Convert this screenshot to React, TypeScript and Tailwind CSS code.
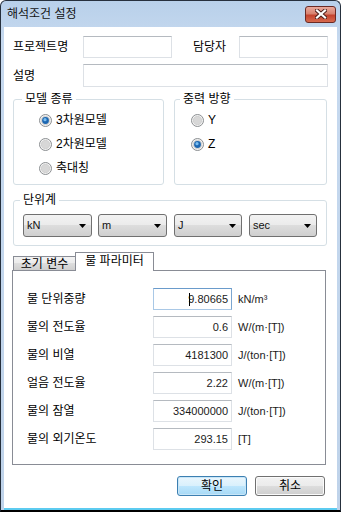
import React from "react";

const TextBox = ({ w, value, focused }: { w: string; value?: string; focused?: boolean }) => (
  <div
    className={`${w} h-[22px] flex items-center justify-end pr-[3px] text-[11px] text-[#1b1b1b] border ${
      focused ? "border-[#a9c8e6] border-t-[#6a9bcb] border-r-[#7ba6d0]" : "border-[#dde1e6] border-t-[#b5bac0]"
    }`}
  >
    {focused && <span className="inline-block w-px h-[13px] bg-black -mr-[2px] relative z-10" />}
    {value}
  </div>
);

const RadioDot = ({ checked }: { checked?: boolean }) => (
  <svg width="13" height="13" viewBox="0 0 13 13">
    <circle cx="6.5" cy="6.5" r="6" fill="#f3f3f3" stroke="#8b8e91" />
    <circle cx="6.5" cy="6.5" r="4.2" fill="#d7d7d7" stroke="#c4c4c4" strokeWidth="0.6" />
    {checked && (
      <>
        <circle cx="6.5" cy="6.5" r="3.4" fill="#1d67b1" />
        <circle cx="6" cy="5.7" r="1.6" fill="#79bdf0" />
      </>
    )}
  </svg>
);

const Radio = ({ label, checked }: { label: string; checked?: boolean }) => (
  <div className="flex items-center h-[24px]">
    <RadioDot checked={checked} />
    <span className="ml-[4px] leading-[14px]">{label}</span>
  </div>
);

const Combo = ({ w, ml, value }: { w: string; ml: string; value: string }) => (
  <div
    className={`${w} ${ml} h-[23px] flex items-center pl-[3px] pr-[5px] border border-[#707070] rounded-[3px] bg-[linear-gradient(#f2f2f2,#ebebeb_50%,#dddddd_50%,#cfcfcf)]`}
  >
    <span className="flex-1 text-[11px] text-[#111]">{value}</span>
    <svg width="7" height="4" viewBox="0 0 7 4">
      <path d="M0 0h7L3.5 4z" fill="#000" />
    </svg>
  </div>
);

const params = [
  { label: "물 단위중량", value: "9.80665", unit: "kN/m³", focused: true },
  { label: "물의 전도율", value: "0.6", unit: "W/(m·[T])" },
  { label: "물의 비열", value: "4181300", unit: "J/(ton·[T])" },
  { label: "얼음 전도율", value: "2.22", unit: "W/(m·[T])" },
  { label: "물의 잠열", value: "334000000", unit: "J/(ton·[T])" },
  { label: "물의 외기온도", value: "293.15", unit: "[T]" },
];

export default function App() {
  return (
    <div className="w-[341px] h-[512px] font-['Liberation_Sans','Noto_Sans_CJK_KR',sans-serif] text-[12px] text-black">
      <div className="w-[341px] h-[512px] flex flex-col rounded-t-[6px] border border-b-2 border-[#26303d] border-b-black bg-[linear-gradient(#b8d0ea,#c6d9ef_40px,#bfd3ea)]">
        {/* Title bar */}
        <div className="h-[26px] flex items-center pl-[6px] pr-[4px]">
          <span className="flex-1 leading-[14px] text-[#141414]">해석조건 설정</span>
          <div className="w-[31px] h-[17px] flex items-center justify-center rounded-[3px] border border-[#6a2a24] bg-[linear-gradient(#e9a99b,#d8826f_45%,#c4432e_55%,#d76a4e)]">
            <svg width="12" height="10" viewBox="0 0 12 10">
              <path d="M2 1.5l8 7M10 1.5l-8 7" stroke="#4a1c18" strokeWidth="4" strokeLinecap="square" />
              <path d="M2 1.5l8 7M10 1.5l-8 7" stroke="#fff" strokeWidth="2.2" strokeLinecap="square" />
            </svg>
          </div>
        </div>

        {/* Body */}
        <div className="flex-1 mx-[3px] bg-white border-b-2 border-[#5ccbf0] px-[9px] pt-[9px] flex flex-col">
          <div className="flex items-center h-[22px]">
            <span className="w-[70px] leading-[14px]">프로젝트명</span>
            <TextBox w="w-[89px]" />
            <span className="ml-[21px] w-[46px] leading-[14px]">담당자</span>
            <TextBox w="w-[89px]" />
          </div>
          <div className="flex items-center h-[23px] mt-[6px]">
            <span className="w-[70px] leading-[14px]">설명</span>
            <div className="flex-1 h-[23px] border border-[#dde1e6] border-t-[#b5bac0]" />
          </div>

          <div className="mt-[5px] flex gap-[10px]">
            <fieldset className="w-[151px] h-[93px] border border-[#d5dfe5] rounded-[3px]">
              <legend className="ml-[8px] px-[3px] leading-[14px]">모델 종류</legend>
              <div className="pt-[2px] pl-[25px]">
                <Radio label="3차원모델" checked />
                <Radio label="2차원모델" />
                <Radio label="축대칭" />
              </div>
            </fieldset>
            <fieldset className="w-[153px] h-[93px] border border-[#d5dfe5] rounded-[3px]">
              <legend className="ml-[5px] px-[3px] leading-[14px]">중력 방향</legend>
              <div className="pt-[2px] pl-[16px]">
                <Radio label="Y" />
                <Radio label="Z" checked />
              </div>
            </fieldset>
          </div>

          <fieldset className="mt-[8px] w-[314px] h-[53px] border border-[#d5dfe5] rounded-[3px]">
            <legend className="ml-[6px] px-[3px] leading-[14px]">단위계</legend>
            <div className="pt-[7px] pl-[9px] flex">
              <Combo w="w-[69px]" ml="ml-0" value="kN" />
              <Combo w="w-[69px]" ml="ml-[6px]" value="m" />
              <Combo w="w-[68px]" ml="ml-[7px]" value="J" />
              <Combo w="w-[68px]" ml="ml-[7px]" value="sec" />
            </div>
          </fieldset>

          {/* Tabs */}
          <div className="mt-[6px] -ml-px h-[19px] -mb-px flex items-end relative z-10">
            <div className="ml-px mb-px w-[63px] h-[14px] flex items-center justify-center border border-b-0 border-[#898c95] bg-[linear-gradient(#f2f2f2,#ebebeb_50%,#dddddd_50%,#cfcfcf)] leading-[12px]">
              초기 변수
            </div>
            <div className="-ml-px w-[79px] h-[19px] flex items-center justify-center border border-b-0 border-[#898c95] bg-white leading-[14px] pb-[2px]">
              물 파라미터
            </div>
          </div>
          <div className="-ml-px w-[314px] h-[195px] border border-[#898c95] pt-[17px] pl-[14px] flex flex-col gap-[6px]">
            {params.map((p) => (
              <div key={p.label} className="flex items-center h-[22px]">
                <span className="w-[126px] leading-[14px]">{p.label}</span>
                <TextBox w="w-[79px]" value={p.value} focused={p.focused} />
                <span className="ml-[6px] text-[11px] text-[#1b1b1b]">{p.unit}</span>
              </div>
            ))}
          </div>

          {/* Buttons */}
          <div className="mt-[11px] flex justify-end gap-[8px] pr-[3px]">
            <button className="w-[70px] h-[20px] rounded-[3px] border border-[#3c7fb1] bg-[linear-gradient(#eaf6fd,#d9f0fc_50%,#bee6fd_50%,#a7d9f5)] shadow-[inset_0_0_0_1px_#c8e6f8] leading-[14px]">
              확인
            </button>
            <button className="w-[70px] h-[20px] rounded-[3px] border border-[#707070] bg-[linear-gradient(#f2f2f2,#ebebeb_50%,#dddddd_50%,#cfcfcf)] shadow-[inset_0_0_0_1px_#fbfbfb] leading-[14px]">
              취소
            </button>
          </div>
        </div>
      </div>
    </div>
  );
}
